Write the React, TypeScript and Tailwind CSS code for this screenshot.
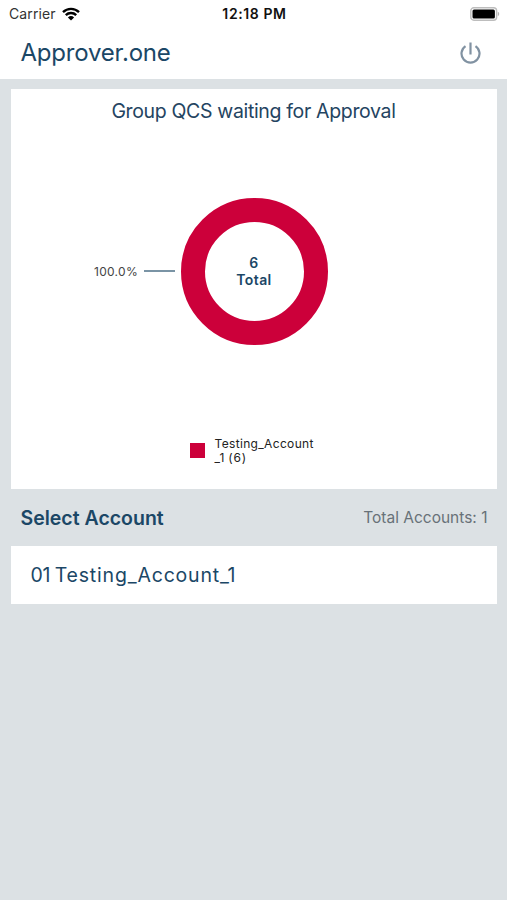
const accounts = [
    { id: '01', name: 'Testing_Account_1' },
]

const App = () => {
    return (
        <div className="h-[900px] w-[507px] overflow-hidden bg-[#dce1e4] font-['Inter',sans-serif] text-[#1b4766]">
            <div className="bg-white">
                <StatusBar />
                <header className="flex h-[52px] items-center justify-between pr-[26px] pl-[20.5px]">
                    <h1 className="text-[24px] leading-[28px] tracking-[-0.2px]">Approver.one</h1>
                    <PowerIcon />
                </header>
            </div>
            <main className="px-[10.5px] pt-[9.5px]">
                <section className="flex h-[400.5px] flex-col items-center bg-white">
                    <h2 className="pt-[10px] text-[19.5px] leading-[24px] tracking-[-0.34px] text-[#244461]">Group QCS waiting for Approval</h2>
                    <DonutChart />
                    <Legend />
                </section>
                <div className="flex h-[56.5px] items-center justify-between pt-[1px] pr-[9px] pl-[10px]">
                    <h3 className="pt-[2px] text-[19.5px] font-semibold">Select Account</h3>
                    <p className="text-[15.5px] text-[#687178]">Total Accounts: 1</p>
                </div>
                {accounts.map((account) => (
                    <div key={account.id} className="flex h-[58.5px] items-center bg-white pt-[2px] pl-[20px]">
                        <p className="text-[19.5px] tracking-[0.82px] [word-spacing:-2px]">
                            <span className="tracking-[-0.2px]">{account.id}</span> {account.name}
                        </p>
                    </div>
                ))}
            </main>
        </div>
    )
}

export default App

const StatusBar = () => (
    <div className="grid h-[27px] grid-cols-3 items-center pr-[7px] pl-[9px] text-[14px] text-[#111]">
        <div className="flex items-center gap-[6px]">
            <span className="tracking-[0.1px] text-[#333]">Carrier</span>
            <WifiIcon />
        </div>
        <span className="text-center font-semibold tracking-[0.6px]">12:18 PM</span>
        <div className="flex justify-end">
            <BatteryIcon />
        </div>
    </div>
)

const DonutChart = () => (
    <div className="mt-[75px] flex h-[147px] w-full items-center pl-[83.5px]">
        <span className="w-[50px] pt-[2px] text-[12px] tracking-[0.3px] text-[#444]">100.0%</span>
        <svg width="31" height="2">
            <path d="M0 1h31" stroke="#41667f" strokeWidth="1.4" />
        </svg>
        <div className="ml-[5.5px] flex size-[147px] flex-col items-center justify-center rounded-full border-[24.5px] border-[#cc003a] text-[14px] leading-[17px] font-semibold tracking-[0.4px]">
            <span>6</span>
            <span>Total</span>
        </div>
    </div>
)

const Legend = () => (
    <div className="mt-[91.5px] flex w-[128px] items-center gap-[10px]">
        <div className="size-[15px] shrink-0 bg-[#cc003a]" />
        <p className="pt-[1px] text-[12px] leading-[14px] tracking-[0.34px] text-[#222]">
            Testing_Account
            <br />
            <span className="tracking-[0.8px] [word-spacing:-1px]">_1 (6)</span>
        </p>
    </div>
)

const PowerIcon = () => (
    <svg width="21" height="22" viewBox="0 0 21 22" fill="none" stroke="#8192a2" strokeWidth="2.200">
        <path d="M10.500 .500v12M5.500 4.100a9 9 0 1 0 10 0" />
    </svg>
)

const WifiIcon = () => (
    <svg width="18" height="14" viewBox="0 0 18 14" fill="none" stroke="#000" strokeWidth="2.400">
        <path d="M1 5.100a11.500 11.500 0 0 1 16 0M3.800 8.100a7.400 7.400 0 0 1 10.400 0" />
        <path d="M9 13.500 5.900 10.400a4.500 4.500 0 0 1 6.200 0Z" fill="#000" stroke="none" />
    </svg>
)

const BatteryIcon = () => (
    <svg width="30" height="14" viewBox="0 0 30 14">
        <rect x=".8" y=".8" width="25.800" height="12.400" rx="3" fill="none" stroke="#bdbdbd" strokeWidth="1.400" />
        <rect x="2.500" y="2.500" width="22.400" height="9" rx="1.500" fill="#000" />
        <path d="M27.800 4.800a2.400 2.400 0 0 1 0 4.400Z" fill="#b4b4b4" />
    </svg>
)
